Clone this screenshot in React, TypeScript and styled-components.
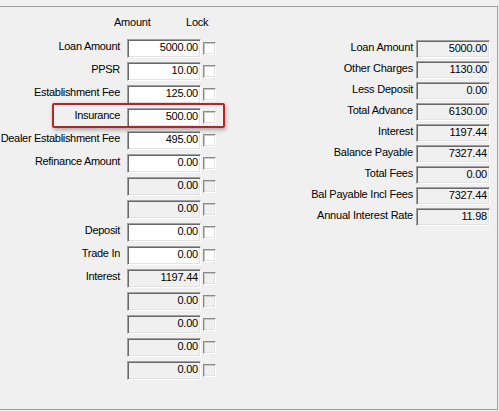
import React from "react";
import { createGlobalStyle, styled } from "styled-components";

type Field = {
  label: string;
  value: string;
  readOnly?: boolean;
  highlight?: boolean;
};

const amounts: Field[] = [
  { label: "Loan Amount", value: "5000.00" },
  { label: "PPSR", value: "10.00" },
  { label: "Establishment Fee", value: "125.00" },
  { label: "Insurance", value: "500.00", highlight: true },
  { label: "Dealer Establishment Fee", value: "495.00" },
  { label: "Refinance Amount", value: "0.00" },
  { label: "", value: "0.00", readOnly: true },
  { label: "", value: "0.00", readOnly: true },
  { label: "Deposit", value: "0.00" },
  { label: "Trade In", value: "0.00" },
  { label: "Interest", value: "1197.44", readOnly: true },
  { label: "", value: "0.00", readOnly: true },
  { label: "", value: "0.00", readOnly: true },
  { label: "", value: "0.00", readOnly: true },
  { label: "", value: "0.00", readOnly: true },
];

const summary: Field[] = [
  { label: "Loan Amount", value: "5000.00" },
  { label: "Other Charges", value: "1130.00" },
  { label: "Less Deposit", value: "0.00" },
  { label: "Total Advance", value: "6130.00" },
  { label: "Interest", value: "1197.44" },
  { label: "Balance Payable", value: "7327.44" },
  { label: "Total Fees", value: "0.00" },
  { label: "Bal Payable Incl Fees", value: "7327.44" },
  { label: "Annual Interest Rate", value: "11.98" },
];

function App() {
  return (
    <>
      <GlobalStyle />
      <Panel>
        <AmountSection>
          <HeaderRow>
            <HeaderCell $width={72}>Amount</HeaderCell>
            <HeaderCell>Lock</HeaderCell>
          </HeaderRow>
          {amounts.map((f, i) => (
            <AmountRow key={i}>
              <Label>{f.label}</Label>
              <ValueBox $readOnly={f.readOnly}>{f.value}</ValueBox>
              <LockBox $disabled={f.readOnly} />
              {f.highlight && <Highlight />}
            </AmountRow>
          ))}
        </AmountSection>
        <SummarySection>
          {summary.map((f) => (
            <SummaryRow key={f.label}>
              <SummaryLabel>{f.label}</SummaryLabel>
              <ValueBox $readOnly $short>
                {f.value}
              </ValueBox>
            </SummaryRow>
          ))}
        </SummarySection>
      </Panel>
    </>
  );
}

const GlobalStyle = createGlobalStyle`
  html, body {
    margin: 0;
    padding: 0;
    background: #f0f0f0;
  }
  body {
    font-family: "Liberation Sans", Arial, sans-serif;
    font-size: 11px;
    letter-spacing: -0.22px;
    color: #000;
  }
`;

const Panel = styled.div`
  margin-top: 6px;
  width: 498px;
  height: 404px;
  box-sizing: border-box;
  border: 1px solid #a0a0a0;
  border-left: none;
  display: flex;
`;

const AmountSection = styled.div`
  width: 230px;
  padding-top: 9px;
  display: flex;
  flex-direction: column;
  gap: 4px;
`;

const HeaderRow = styled.div`
  display: flex;
  padding-left: 114px;
  line-height: 13px;
  margin-bottom: 6px;
`;

const HeaderCell = styled.span<{ $width?: number }>`
  width: ${(p) => (p.$width ? `${p.$width}px` : "auto")};
`;

const AmountRow = styled.div`
  position: relative;
  display: flex;
  align-items: flex-start;
  height: 19px;
`;

const Label = styled.div`
  width: 120px;
  margin-right: 7px;
  display: flex;
  justify-content: flex-end;
  white-space: nowrap;
  letter-spacing: -0.3px;
  line-height: 13px;
  padding-top: 1px;
`;

const ValueBox = styled.div<{ $readOnly?: boolean; $short?: boolean }>`
  width: 74px;
  height: ${(p) => (p.$short ? 18 : 19)}px;
  box-sizing: border-box;
  border: 1px solid;
  border-color: #a0a0a0 #ffffff #ffffff #a0a0a0;
  box-shadow: inset 1px 1px #696969, inset -1px -1px #e3e3e3;
  background: ${(p) => (p.$readOnly ? "#f0f0f0" : "#ffffff")};
  padding: 1px 2px 0 0;
  text-align: right;
  line-height: 13px;
  white-space: nowrap;
`;

const LockBox = styled.div<{ $disabled?: boolean }>`
  width: 13px;
  height: 13px;
  margin: 3px 0 0 2px;
  box-sizing: border-box;
  border: 1px solid;
  border-color: #8a8a8a #ffffff #ffffff #8a8a8a;
  box-shadow: inset 1px 1px #c8c8c8, inset -1px -1px #e3e3e3;
  background: ${(p) => (p.$disabled ? "#f0f0f0" : "#ffffff")};
`;

const Highlight = styled.div`
  position: absolute;
  left: 52px;
  top: -5px;
  width: 173px;
  height: 25px;
  box-sizing: border-box;
  border: 2px solid #b2252b;
  border-radius: 2px;
  box-shadow: 1px 2px 4px rgba(0, 0, 0, 0.3);
  pointer-events: none;
`;

const SummarySection = styled.div`
  flex: 1;
  padding: 33px 7px 0 0;
  display: flex;
  flex-direction: column;
  align-items: flex-end;
  gap: 3px;
`;

const SummaryRow = styled.div`
  display: flex;
  align-items: flex-start;
  gap: 3px;
`;

const SummaryLabel = styled.div`
  white-space: nowrap;
  line-height: 13px;
  padding-top: 1px;
`;

export default App;
